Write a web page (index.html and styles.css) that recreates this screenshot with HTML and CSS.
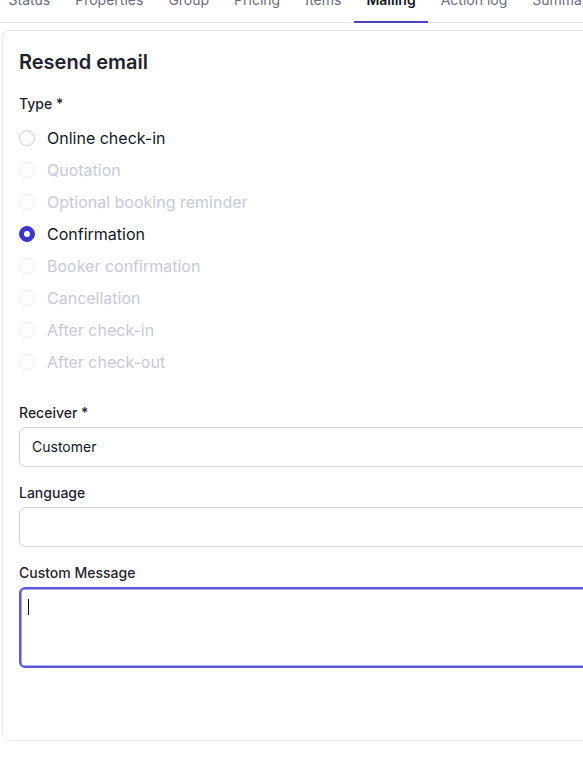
FILE: index.html
```html
<!DOCTYPE html>
<html lang="en">
<head>
<meta charset="utf-8">
<title>Resend email</title>
<link rel="stylesheet" href="styles.css">
</head>
<body>
<nav class="tabs">
  <a class="tab">Status</a>
  <a class="tab">Properties</a>
  <a class="tab">Group</a>
  <a class="tab">Pricing</a>
  <a class="tab">Items</a>
  <a class="tab active">Mailing</a>
  <a class="tab">Action log</a>
  <a class="tab">Summary</a>
</nav>
<section class="card">
  <h2 class="title">Resend email</h2>
  <div class="field">
    <div class="label">Type *</div>
    <ul class="radios">
      <li class="radio"><span class="dot"></span><span>Online check-in</span></li>
      <li class="radio disabled"><span class="dot"></span><span>Quotation</span></li>
      <li class="radio disabled"><span class="dot"></span><span>Optional booking reminder</span></li>
      <li class="radio checked"><span class="dot"></span><span>Confirmation</span></li>
      <li class="radio disabled"><span class="dot"></span><span>Booker confirmation</span></li>
      <li class="radio disabled"><span class="dot"></span><span>Cancellation</span></li>
      <li class="radio disabled"><span class="dot"></span><span>After check-in</span></li>
      <li class="radio disabled"><span class="dot"></span><span>After check-out</span></li>
    </ul>
  </div>
  <div class="field receiver">
    <div class="label">Receiver *</div>
    <div class="input">Customer</div>
  </div>
  <div class="field">
    <div class="label">Language</div>
    <div class="input"></div>
  </div>
  <div class="field">
    <div class="label">Custom Message</div>
    <div class="textarea"><span class="caret"></span></div>
  </div>
</section>
</body>
</html>
```
FILE: styles.css
```css
* { box-sizing: border-box; }
html, body {
  margin: 0;
  padding: 0;
  background: #ffffff;
  overflow: hidden;
}
body {
  font-family: Inter, "Noto Sans", "Liberation Sans", sans-serif;
  color: #1f2937;
  width: 583px;
  height: 778px;
}
.tabs {
  display: flex;
  margin: -10px 0 0 -4px;
  border-bottom: 1px solid #e5e7eb;
  width: 700px;
}
.tab {
  display: block;
  padding: 0 12.5px 11px;
  font-size: 14px;
  line-height: 20px;
  color: #6b6d85;
  font-weight: 400;
  white-space: nowrap;
  border-bottom: 2px solid transparent;
  margin-bottom: -1px;
}
.tab.active {
  color: #111827;
  font-weight: 600;
  border-bottom-color: #4b44c8;
}
.card {
  margin: 7px 0 0 2px;
  width: 680px;
  border: 1px solid #e5e7eb;
  border-radius: 8px;
  padding: 17px 16px 72px;
  display: flex;
  flex-direction: column;
}
.title {
  margin: 0;
  font-size: 20px;
  line-height: 28px;
  font-weight: 600;
  color: #1f2330;
}
.field {
  display: flex;
  flex-direction: column;
  gap: 4px;
  margin-top: 16px;
}
.field:first-of-type { margin-top: 18px; }
.field.receiver { margin-top: 25px; }
.label {
  font-size: 14px;
  line-height: 20px;
  font-weight: 500;
  color: #1f2330;
}
.radios {
  list-style: none;
  margin: 4px 0 0;
  padding: 0;
  display: flex;
  flex-direction: column;
}
.radio {
  display: flex;
  align-items: center;
  gap: 12px;
  height: 32px;
  font-size: 16px;
  line-height: 24px;
  color: #111827;
}
.dot {
  width: 16px;
  height: 16px;
  border-radius: 50%;
  border: 1px solid #cfd1d8;
  background: #fff;
  flex: none;
  display: flex;
  align-items: center;
  justify-content: center;
}
.radio.disabled { color: #c8c8d8; }
.radio.disabled .dot { border-color: #ececf1; }
.radio.checked .dot {
  border-color: #3b34d8;
  background: #3b34d8;
}
.radio.checked .dot::after {
  content: "";
  width: 6px;
  height: 6px;
  border-radius: 50%;
  background: #fff;
}
.input {
  height: 40px;
  border: 1px solid #cfd1d8;
  border-radius: 6px;
  padding: 9px 12px;
  font-size: 14px;
  line-height: 20px;
  color: #111827;
}
.textarea {
  height: 81px;
  border: 2px solid #5858d8;
  box-shadow: inset 0 0 0 0.5px #5858d8;
  border-radius: 6px;
  padding: 10px 7px;
}
.caret {
  display: block;
  width: 1px;
  height: 16px;
  background: #111;
}
```
